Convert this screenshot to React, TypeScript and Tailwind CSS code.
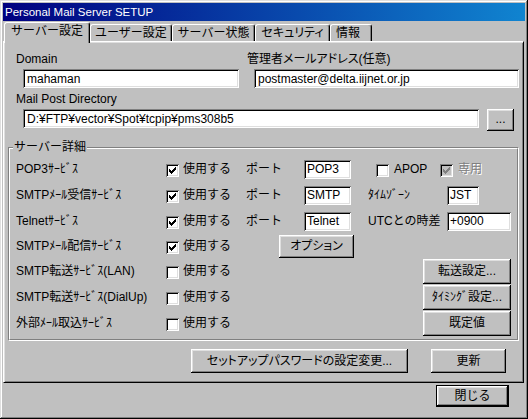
import React from 'react';

const FONT = "[font-family:'Liberation_Sans','Noto_Sans_CJK_JP',sans-serif]";
const RAISED =
  'bg-[#c0c0c0] shadow-[inset_-1px_-1px_0_#000000,inset_1px_1px_0_#ffffff,inset_-2px_-2px_0_#808080,inset_2px_2px_0_#dfdfdf]';
const SUNKEN =
  'shadow-[inset_1px_1px_0_#808080,inset_-1px_-1px_0_#ffffff,inset_2px_2px_0_#000000,inset_-2px_-2px_0_#dfdfdf]';

function Btn({ className = '', children }: { className?: string; children: React.ReactNode }) {
  return (
    <div className={`${RAISED} shrink-0 flex items-center justify-center whitespace-nowrap ${className}`}>
      {children}
    </div>
  );
}

function Field({ className = '', children }: { className?: string; children?: React.ReactNode }) {
  return (
    <div className={`${SUNKEN} bg-white shrink-0 flex items-center whitespace-nowrap overflow-hidden ${className}`}>
      {children}
    </div>
  );
}

function Check({ color }: { color: string }) {
  return (
    <svg width="13" height="13" viewBox="0 0 13 13" className="block" shapeRendering="crispEdges">
      <path
        fill={color}
        d="M9 3h1v3h-1zM8 4h1v3h-1zM7 5h1v3h-1zM6 6h1v3h-1zM5 7h1v3h-1zM4 6h1v3h-1zM3 5h1v3h-1z"
      />
    </svg>
  );
}

function Checkbox({
  checked = false,
  disabled = false,
  className = '',
}: {
  checked?: boolean;
  disabled?: boolean;
  className?: string;
}) {
  return (
    <div
      className={`${SUNKEN} ${disabled ? 'bg-[#c0c0c0]' : 'bg-white'} w-[13px] h-[13px] shrink-0 mt-[3px] ${className}`}
    >
      {checked && <Check color={disabled ? '#808080' : '#000000'} />}
    </div>
  );
}

function Tab({
  selected = false,
  className = '',
  children,
}: {
  selected?: boolean;
  className?: string;
  children: React.ReactNode;
}) {
  if (selected) {
    return (
      <div
        className={`relative h-[21px] mb-[-2px] bg-[#c0c0c0] border-t border-l border-r border-t-white border-l-white border-r-black rounded-t-[3px] shadow-[inset_-1px_0_0_#808080] flex justify-center pt-[1px] whitespace-nowrap shrink-0 ${className}`}
      >
        {children}
      </div>
    );
  }
  return (
    <div
      className={`h-[17px] bg-[#c0c0c0] border-t border-l border-r border-t-white border-l-white border-r-black rounded-t-[3px] shadow-[inset_-1px_0_0_#808080] flex items-center justify-center whitespace-nowrap shrink-0 ${className}`}
    >
      {children}
    </div>
  );
}

function Row({
  label,
  checked = false,
  className = 'h-[26px]',
  children,
}: {
  label: string;
  checked?: boolean;
  className?: string;
  children?: React.ReactNode;
}) {
  return (
    <div className={`flex items-center ${className}`}>
      <span className="w-[150px] shrink-0 whitespace-nowrap">{label}</span>
      <Checkbox checked={checked} />
      <span className="ml-[4px] w-[63px] shrink-0 whitespace-nowrap">使用する</span>
      {children}
    </div>
  );
}

export default function App() {
  return (
    <div
      className={`w-[528px] h-[419px] bg-[#c0c0c0] p-[3px] flex flex-col text-[12px] leading-[14px] text-black ${FONT} shadow-[inset_-1px_-1px_0_#000000,inset_1px_1px_0_#dfdfdf,inset_-2px_-2px_0_#808080,inset_2px_2px_0_#ffffff]`}
    >
      {/* Title bar */}
      <div className="h-[18px] shrink-0 flex items-center pl-[2px] text-white text-[11.5px] bg-[linear-gradient(to_right,#000080,#1084d0)]">
        Personal Mail Server SETUP
      </div>

      {/* Tabs */}
      <div className="h-[19px] mt-[1px] shrink-0 flex items-end pl-[1px] relative z-10">
        <Tab selected className="w-[86px]">
          サーバー設定
        </Tab>
        <Tab className="w-[82px]">ユーザー設定</Tab>
        <Tab className="w-[83px]">サーバー状態</Tab>
        <Tab className="w-[75px] [font-feature-settings:'palt']">セキュリティ</Tab>
        <Tab className="w-[42px] justify-start pl-[5px]">情報</Tab>
      </div>

      {/* Panel */}
      <div className="w-[521px] h-[342px] shrink-0 border border-t-white border-l-white border-r-black border-b-black shadow-[inset_1px_1px_0_#dfdfdf,inset_-1px_-1px_0_#808080] flex flex-col">
        <div className="mt-[10px] ml-[12px] flex">
          <div className="w-[231px] flex flex-col shrink-0">
            <span>Domain</span>
            <Field className="mt-[3px] ml-[7px] w-[216px] h-[19px] pl-[4px]">mahaman</Field>
          </div>
          <div className="flex flex-col">
            <span className="whitespace-nowrap [font-feature-settings:'palt']">管理者メールアドレス(任意)</span>
            <Field className="mt-[3px] ml-[7px] w-[265px] h-[19px] pl-[4px]">postmaster@delta.iijnet.or.jp</Field>
          </div>
        </div>

        <div className="ml-[12px] mt-[4px]">Mail Post Directory</div>
        <div className="mt-[3px] ml-[19px] flex items-start">
          <Field className="w-[456px] h-[19px] pl-[4px]">D:¥FTP¥vector¥Spot¥tcpip¥pms308b5</Field>
          <Btn className="ml-[8px] w-[27px] h-[22px] pb-[2px]">...</Btn>
        </div>

        {/* Group box */}
        <div className="relative mt-[16px] ml-[4px] w-[511px] shrink-0 border border-t-[#808080] border-l-[#808080] border-r-white border-b-white">
          <span className="absolute left-[4px] top-[-8px] px-[1px] bg-[#c0c0c0] whitespace-nowrap">サーバー詳細</span>
          <div className="border border-t-white border-l-white border-r-[#808080] border-b-[#808080] pt-[7px] pl-[6px] pr-[6px] pb-[3px] flex flex-col">
            <Row label="POP3ｻｰﾋﾞｽ" checked>
              <span className="w-[58px] shrink-0">ポート</span>
              <Field className="w-[47px] h-[19px] pl-[3px]">POP3</Field>
              <Checkbox className="ml-[25px]" />
              <span className="ml-[5px] w-[46px] shrink-0">APOP</span>
              <Checkbox checked disabled />
              <span className="ml-[5px] text-[#808080] [text-shadow:1px_1px_0_#ffffff]">専用</span>
            </Row>
            <Row label="SMTPﾒｰﾙ受信ｻｰﾋﾞｽ" checked>
              <span className="w-[58px] shrink-0">ポート</span>
              <Field className="w-[47px] h-[19px] pl-[3px]">SMTP</Field>
              <span className="ml-[17px] w-[79px] shrink-0 whitespace-nowrap">ﾀｲﾑｿﾞｰﾝ</span>
              <Field className="w-[32px] h-[19px] pl-[3px]">JST</Field>
            </Row>
            <Row label="Telnetｻｰﾋﾞｽ" checked>
              <span className="w-[58px] shrink-0">ポート</span>
              <Field className="w-[47px] h-[19px] pl-[3px]">Telnet</Field>
              <span className="ml-[17px] w-[79px] shrink-0 whitespace-nowrap">UTCとの時差</span>
              <Field className="w-[64px] h-[19px] pl-[3px]">+0900</Field>
            </Row>
            <Row label="SMTPﾒｰﾙ配信ｻｰﾋﾞｽ" checked className="h-[24px]">
              <Btn className="ml-[33px] w-[75px] h-[23px] [font-feature-settings:'palt']">オプション</Btn>
            </Row>
            <Row label="SMTP転送ｻｰﾋﾞｽ(LAN)">
              <Btn className="ml-auto w-[88px] h-[25px]">転送設定...</Btn>
            </Row>
            <Row label="SMTP転送ｻｰﾋﾞｽ(DialUp)">
              <Btn className="ml-auto w-[88px] h-[25px]">ﾀｲﾐﾝｸﾞ設定...</Btn>
            </Row>
            <Row label="外部ﾒｰﾙ取込ｻｰﾋﾞｽ">
              <Btn className="ml-auto w-[88px] h-[25px]">既定値</Btn>
            </Row>
          </div>
        </div>

        <div className="mt-[8px] ml-[187px] flex">
          <Btn className="w-[217px] h-[24px] [font-feature-settings:'palt']">セットアップパスワードの設定変更...</Btn>
          <Btn className="ml-[23px] w-[75px] h-[24px]">更新</Btn>
        </div>
      </div>

      {/* Bottom */}
      <div className="flex justify-end pt-[2px] pr-[16px] shrink-0">
        <div className="border border-black w-[73px] h-[22px] flex">
          <Btn className="w-full h-full">閉じる</Btn>
        </div>
      </div>
    </div>
  );
}
